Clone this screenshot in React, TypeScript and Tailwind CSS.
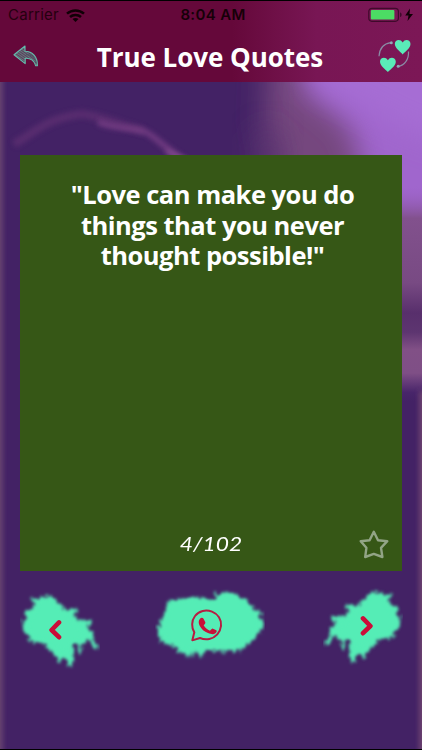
import { useState } from 'react'

const TOTAL = 102

function Background() {
  return (
    <svg className="absolute inset-0 -z-10" width="422" height="750" viewBox="0 0 422 750" aria-hidden="true">
      <defs>
        <filter id="soft" x="-50%" y="-50%" width="200%" height="200%">
          <feGaussianBlur stdDeviation="14" />
        </filter>
        <filter id="mist" x="-50%" y="-50%" width="200%" height="200%">
          <feGaussianBlur stdDeviation="6" />
        </filter>
        <filter id="glow" x="-50%" y="-50%" width="200%" height="200%">
          <feGaussianBlur stdDeviation="2.5" />
        </filter>
        <linearGradient id="rim" x1="0" y1="185" x2="0" y2="400" gradientUnits="userSpaceOnUse">
          <stop offset="0" stopColor="#9a60c5" stopOpacity="0" />
          <stop offset=".15" stopColor="#82518d" />
          <stop offset=".45" stopColor="#784a83" />
          <stop offset=".59" stopColor="#582f6c" />
          <stop offset=".68" stopColor="#5d3570" />
          <stop offset=".76" stopColor="#815086" />
          <stop offset=".87" stopColor="#7f4f86" />
          <stop offset=".96" stopColor="#48256a" />
          <stop offset="1" stopColor="#432265" />
        </linearGradient>
      </defs>
      <rect width="422" height="750" fill="#432265" />
      <path d="M268 40H460V220H290L274 180L264 120Z" fill="#74477e" filter="url(#soft)" />
      <ellipse cx="268" cy="152" rx="18" ry="26" fill="#5c3570" opacity=".6" filter="url(#soft)" />
      <path d="M300 40H470V280H392L366 190L352 130L326 106L305 92Z" fill="#a066cd" filter="url(#soft)" />
      <path d="M314 40H470V150L400 125L350 98L318 84Z" fill="#a66dd4" filter="url(#soft)" />
      <rect x="395" y="185" width="27" height="215" fill="url(#rim)" />
      <path
        d="M14 143C32 134 45 117 82 113C104 116 120 124 144 130"
        fill="none"
        stroke="#643374"
        strokeWidth="8"
        filter="url(#glow)"
        opacity=".65"
      />
      <path
        d="M98 121C114 128 130 126 146 131C158 138 166 148 186 160"
        fill="none"
        stroke="#7a4187"
        strokeWidth="6"
        filter="url(#glow)"
        opacity=".8"
      />
      <path d="M166 150L190 162" fill="none" stroke="#94579a" strokeWidth="3" filter="url(#glow)" />
      <rect x="-6" y="60" width="9" height="710" fill="#66436f" filter="url(#glow)" />
      <rect x="419" y="390" width="9" height="380" fill="#6d4370" filter="url(#glow)" />
    </svg>
  )
}

function StatusBar() {
  return (
    <div className="flex h-7 items-center px-2 pt-px text-[15px] text-[#25000f] font-['Inter',sans-serif]">
      <div className="flex flex-1 items-center gap-[7px]">
        <span className="tracking-[0.25px]">Carrier</span>
        <svg width="19" height="13" viewBox="0 0 19 13" fill="none" stroke="#100006" strokeWidth="2.5">
          <path d="M1 4.7C5.8 .3 13.2 .3 18 4.7" />
          <path d="M4 8C7 5.2 12 5.2 15 8" />
          <path d="M9.5 13L6.5 10C8.2 8.5 10.8 8.5 12.5 10Z" fill="#100006" stroke="none" />
        </svg>
      </div>
      <span className="ml-[3px] font-semibold tracking-[0.35px] text-[#160008]">8:04 AM</span>
      <div className="-mt-[2px] -mr-px flex flex-1 items-center justify-end">
        <svg width="48" height="16" viewBox="0 0 48 16">
          <rect x="1.8" y="1.3" width="29.6" height="13" rx="3.2" fill="none" stroke="#3f0a2b" strokeWidth="1.2" />
          <rect x="3.8" y="3" width="23.6" height="9.6" rx="1" fill="#4cdc64" />
          <path d="M33 5.5C35.2 6 35.2 9.6 33 10Z" fill="#3f0a2b" />
          <path d="M43 1.5L38.2 8.6H41.5L40.5 14L46 6.9H42.5Z" fill="#100006" />
        </svg>
      </div>
    </div>
  )
}

function BackIcon() {
  return (
    <svg width="26" height="22" viewBox="0 0 26 22">
      <defs>
        <pattern id="hatch" width="2" height="2" patternUnits="userSpaceOnUse" patternTransform="rotate(35)">
          <rect width="2" height="2" fill="#57415c" />
          <path d="M0 .5H2" stroke="#6f8484" strokeWidth=".8" />
        </pattern>
      </defs>
      <path
        d="M1 9.7L12 1V6.2C19.5 6.3 24.6 11.5 24.4 20.7L22.7 20.8C21 14.9 17.8 13 12.2 13.3V18.6Z"
        fill="url(#hatch)"
        stroke="#62bdac"
        strokeWidth="1.1"
        strokeLinejoin="round"
      />
      <path d="M13 9.6C18.2 9.5 22 12.5 23.2 18" fill="none" stroke="#4d5365" strokeWidth="1" />
    </svg>
  )
}

function HeartsIcon() {
  return (
    <svg width="34" height="34" viewBox="0 0 34 34">
      <g fill="#5aecb8">
        <path d="M24.7 15.4C22.4 12.5 17 9.5 16.8 5C16.7 .7 22.5-.5 24.7 3.6C26.9-.5 32.5 .8 32.5 5C32.5 9.5 27 12.5 24.7 15.4Z" />
        <path d="M9.9 33.1C7.6 30.2 2.1 27.2 2 22.7C1.9 18.4 7.7 17.2 9.9 21.3C12.1 17.2 17.8 18.5 17.8 22.7C17.8 27.2 12.2 30.2 9.9 33.1Z" />
      </g>
      <g fill="none" stroke="#8a8ba5" strokeWidth="1.2">
        <path d="M1 17.3C1.5 9.5 6 4.5 13 3.6" />
        <path d="M30.5 12.5C31 20.5 26.5 26.6 20 27.3" />
      </g>
      <circle cx="13.3" cy="3.7" r="1.5" fill="#8eaab5" />
      <circle cx="20.2" cy="27.2" r="1.5" fill="#8eaab5" />
    </svg>
  )
}

function SideSplat() {
  return (
    <svg width="80" height="80" viewBox="60 60 240 240">
      <defs>
        <filter id="splat" x="-20%" y="-20%" width="140%" height="140%">
          <feTurbulence type="fractalNoise" baseFrequency=".12 .05" numOctaves="2" seed="9" result="noise" />
          <feDisplacementMap in="SourceGraphic" in2="noise" scale="24" xChannelSelector="R" yChannelSelector="G" />
          <feGaussianBlur stdDeviation="5" />
        </filter>
        <filter id="fringe" x="-20%" y="-20%" width="140%" height="140%">
          <feGaussianBlur stdDeviation="5" />
        </filter>
      </defs>
      <path
        d="M94 79L108 87L120 86L128 76L136 83L146 77L154 83L163 84L170 98L184 104L194 119L203 121L213 116L234 115L228 130L220 134L233 148L243 153L252 148L280 153L271 164L260 168L264 178L277 186L280 202L277 211L295 226L288 240L276 228L271 213L260 214L248 222L242 252L235 246L233 222L222 223L218 250L216 291L205 288L200 268L194 258L184 267L174 278L172 262L162 255L157 246L148 242L139 224L126 220L110 215L96 219L85 214L92 202L76 187L67 172L70 150L82 147L76 131L80 122L91 120L99 106L108 100L96 94Z"
        fill="#55edb6"
        filter="url(#splat)"
      />
      <path
        d="M122 92L138 86L156 90L168 108L184 126L196 138L212 150L226 172L246 180L256 190L258 202L242 206L224 212L210 224L200 246L186 234L160 230L142 212L112 202L96 188L84 172L90 156L104 132L116 114Z"
        fill="#55edb6"
        filter="url(#fringe)"
      />
    </svg>
  )
}

function PrevIcon() {
  return (
    <svg width="14" height="22" viewBox="0 0 14 22">
      <path d="M11 3.4L3.6 11L11 18.2" fill="none" stroke="#cb0d38" strokeWidth="4.6" strokeLinecap="round" strokeLinejoin="round" />
    </svg>
  )
}

function ShareSplat() {
  return (
    <svg width="110" height="74" viewBox="465 50 330 222">
      <path
        d="M512 86L522 91L530 82L541 88L552 82L563 87L574 80L585 84L594 80L604 86L616 82L627 90L640 88L650 87L644 66L655 72L669 63L681 70L690 64L700 71L712 71L718 83L731 87L745 88L748 104L761 110L758 120L777 119L780 129L774 137L785 149L790 163L785 174L776 180L778 193L768 195L768 208L756 209L750 222L740 218L736 232L728 229L721 245L711 235L705 244L700 257L694 238L683 239L674 238L668 251L661 237L653 248L646 235L635 247L630 238L619 241L611 244L601 270L595 247L588 243L580 262L573 243L567 250L562 273L555 251L545 246L532 244L530 231L521 231L516 221L502 222L490 217L481 218L486 205L472 196L475 179L471 172L482 166L478 153L486 149L484 137L493 132L492 119L502 112L499 97L514 96Z"
        fill="#55edb6"
        filter="url(#splat)"
      />
      <path
        d="M520 96L574 90L620 94L656 92L662 78L690 76L706 82L718 94L738 102L744 116L762 130L766 146L774 160L766 178L756 192L738 210L718 222L692 230L630 230L600 234L564 234L540 226L524 212L500 202L488 190L490 174L494 156L506 128Z"
        fill="#55edb6"
        filter="url(#fringe)"
      />
      <g transform="translate(572 118)">
        <path
          d="M5 92L11 68C2 55 2 33 13 19C25 3 46-1 64 6C82 13 93 30 91 49C89 68 75 84 56 88C47 90 37 89 28 85Z"
          fill="none"
          stroke="#b71c42"
          strokeWidth="6"
          strokeLinejoin="round"
        />
        <path
          d="M28 27C32 23 37 24 39 28L44 38C45 41 42 44 39 47C43 54 50 60 58 63C62 60 64 56 67 57L77 62C80 64 77 69 74 71C68 76 60 73 52 70C41 66 32 58 27 48C23 40 23 32 28 27Z"
          fill="#c81038"
        />
      </g>
    </svg>
  )
}

function StarIcon({ filled }: { filled: boolean }) {
  return (
    <svg width="30" height="29" viewBox="0 0 30 29">
      <path
        d="M14.8 1.8L19 10.2L28.3 11.2L22 17.8L23.4 27L14.8 23.9L6.2 27L7.4 17.8L1.7 11.2L10.6 10.2Z"
        fill={filled ? '#92a486' : 'none'}
        stroke="#92a486"
        strokeWidth="2.4"
        strokeLinejoin="round"
      />
    </svg>
  )
}

export default function App() {
  const [index, setIndex] = useState(4)
  const [starred, setStarred] = useState(false)

  return (
    <div className="relative isolate flex h-[750px] w-[422px] flex-col overflow-hidden border-y border-black">
      <Background />

      <header className="h-[81px] bg-linear-to-r from-[#65083a] from-55% via-[#781654] via-75% to-[#7c1756]">
        <StatusBar />
        <div className="flex h-[53px] items-center justify-between pt-px pr-[10px] pl-[13px]">
          <button aria-label="Back">
            <BackIcon />
          </button>
          <h1 className="mt-[3px] ml-[3px] text-[26px] font-bold tracking-[-0.05px] whitespace-nowrap text-white font-['Open_Sans',sans-serif]">
            True Love Quotes
          </h1>
          <button aria-label="Shuffle">
            <HeartsIcon />
          </button>
        </div>
      </header>

      <main className="mx-5 mt-[73px] flex h-[416px] flex-col bg-[#365716]">
        <p className="pt-6 pl-[3px] text-center text-[25.5px] leading-[30.5px] font-bold tracking-[-0.5px] text-white font-['Open_Sans',sans-serif]">
          "Love can make you do
          <br />
          things that you never
          <br />
          thought possible!"
        </p>
        <div className="mt-auto grid grid-cols-[1fr_auto_1fr] items-center pb-3">
          <span className="col-start-2 scale-x-120 text-center text-[19px] text-white italic font-['Lato',sans-serif]">
            {index}/{TOTAL}
          </span>
          <button className="mr-[13px] justify-self-end" aria-label="Favorite" onClick={() => setStarred(!starred)}>
            <StarIcon filled={starred} />
          </button>
        </div>
      </main>

      <nav className="mt-4 flex items-start justify-between pr-[19px] pl-5">
        <button className="mt-[3px] grid place-items-center" aria-label="Previous" onClick={() => setIndex(Math.max(1, index - 1))}>
          <span className="col-start-1 row-start-1">
            <SideSplat />
          </span>
          <span className="col-start-1 row-start-1 mr-[10px]">
            <PrevIcon />
          </span>
        </button>
        <button className="ml-[-3px]" aria-label="Share on WhatsApp">
          <ShareSplat />
        </button>
        <button className="-mt-px grid -scale-x-100 place-items-center" aria-label="Next" onClick={() => setIndex(Math.min(TOTAL, index + 1))}>
          <span className="col-start-1 row-start-1">
            <SideSplat />
          </span>
          <span className="col-start-1 row-start-1 mr-[9px]">
            <PrevIcon />
          </span>
        </button>
      </nav>
    </div>
  )
}
